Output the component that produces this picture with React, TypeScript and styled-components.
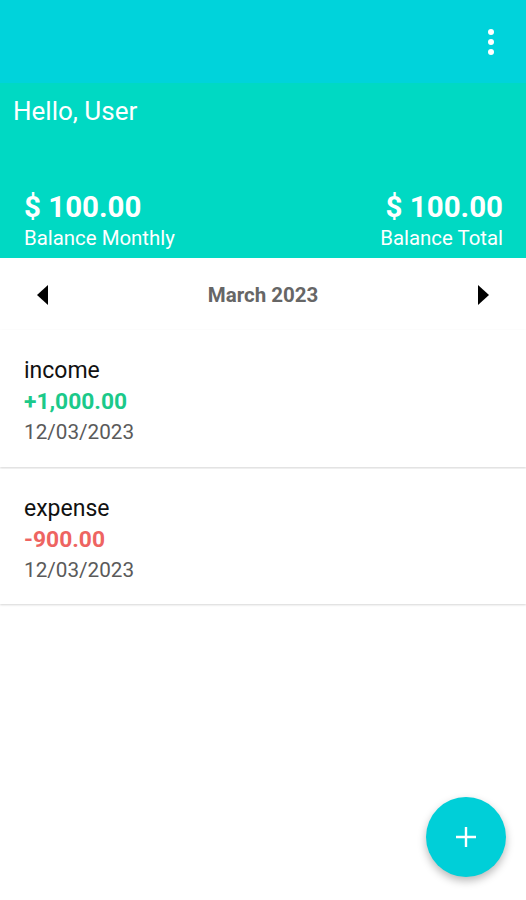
import styled, { createGlobalStyle } from "styled-components";

const GlobalStyle = createGlobalStyle`
  html, body {
    margin: 0;
    padding: 0;
    background: #ffffff;
    font-family: Roboto, "Noto Sans", sans-serif;
  }
`;

const Screen = styled.div`
  position: relative;
  width: 526px;
  height: 900px;
  overflow: hidden;
  background: #ffffff;
`;

const AppBar = styled.header`
  height: 83px;
  background: #00d3db;
  display: flex;
  justify-content: flex-end;
  align-items: center;
  padding-right: 32px;
  box-sizing: border-box;
`;

const Kebab = styled.div`
  display: flex;
  flex-direction: column;
  gap: 4px;
  margin-top: 0;

  span {
    width: 6px;
    height: 6px;
    border-radius: 50%;
    background: #ffffff;
  }
`;

const Header = styled.section`
  height: 175px;
  background: #00d9c3;
  color: #ffffff;
  display: flex;
  flex-direction: column;
  justify-content: space-between;
  padding: 12px 23px 6px 13px;
  box-sizing: border-box;
`;

const Greeting = styled.h1`
  margin: 0;
  font-size: 26px;
  line-height: 32px;
  font-weight: 400;
`;

const Balances = styled.div`
  display: flex;
  justify-content: space-between;
  padding-left: 11px;
`;

const Balance = styled.div<{ $right?: boolean }>`
  display: flex;
  flex-direction: column;
  align-items: ${(p) => (p.$right ? "flex-end" : "flex-start")};
`;

const Amount = styled.span`
  font-size: 29.5px;
  font-weight: 700;
  line-height: 34px;
  margin-top: -4px;
`;

const Label = styled.span`
  font-size: 20.4px;
  line-height: 28px;
`;

const MonthRow = styled.div`
  height: 72px;
  display: flex;
  align-items: center;
  justify-content: space-between;
  padding: 2px 36px 0 36px;
  box-sizing: border-box;
`;

const Month = styled.span`
  font-size: 20.5px;
  font-weight: 700;
  color: #666666;
`;

const Arrow = styled.svg`
  width: 14px;
  height: 20px;
`;

const Card = styled.div<{ $height: number }>`
  height: ${(p) => p.$height}px;
  display: flex;
  flex-direction: column;
  justify-content: center;
  padding: 6px 0 0 24px;
  box-sizing: border-box;
  background: #ffffff;
  box-shadow: 0 1px 2px rgba(0, 0, 0, 0.16);
  margin-bottom: 2px;
`;

const Title = styled.span`
  font-size: 23px;
  line-height: 31px;
  color: #111111;
`;

const Value = styled.span<{ $color: string }>`
  font-size: 22.8px;
  line-height: 31px;
  font-weight: 700;
  color: ${(p) => p.$color};
`;

const DateText = styled.span`
  font-size: 20.7px;
  line-height: 31px;
  color: #5a5a5a;
`;

const Fab = styled.button`
  position: absolute;
  left: 426px;
  top: 797px;
  width: 80px;
  height: 80px;
  border: none;
  border-radius: 50%;
  background: #00cfd8;
  box-shadow: 0 4px 8px rgba(0, 0, 0, 0.28);
  display: flex;
  align-items: center;
  justify-content: center;
  padding: 0;
`;

const transactions = [
  { title: "income", value: "+1,000.00", color: "#1bc98a", date: "12/03/2023", height: 137 },
  { title: "expense", value: "-900.00", color: "#ee6461", date: "12/03/2023", height: 135 },
];

export default function App() {
  return (
    <Screen>
      <GlobalStyle />
      <AppBar>
        <Kebab>
          <span />
          <span />
          <span />
        </Kebab>
      </AppBar>

      <Header>
        <Greeting>Hello, User</Greeting>
        <Balances>
          <Balance>
            <Amount>$ 100.00</Amount>
            <Label>Balance Monthly</Label>
          </Balance>
          <Balance $right>
            <Amount>$ 100.00</Amount>
            <Label>Balance Total</Label>
          </Balance>
        </Balances>
      </Header>

      <MonthRow>
        <Arrow viewBox="0 0 14 20">
          <polygon points="12,0 12,20 1,10" fill="#000" />
        </Arrow>
        <Month>March 2023</Month>
        <Arrow viewBox="0 0 14 20">
          <polygon points="2,0 2,20 13,10" fill="#000" />
        </Arrow>
      </MonthRow>

      {transactions.map((t) => (
        <Card key={t.title} $height={t.height}>
          <Title>{t.title}</Title>
          <Value $color={t.color}>{t.value}</Value>
          <DateText>{t.date}</DateText>
        </Card>
      ))}

      <Fab>
        <svg width="22" height="22" viewBox="0 0 22 22">
          <path d="M11 1v20M1 11h20" stroke="#fff" strokeWidth="2.4" />
        </svg>
      </Fab>
    </Screen>
  );
}
